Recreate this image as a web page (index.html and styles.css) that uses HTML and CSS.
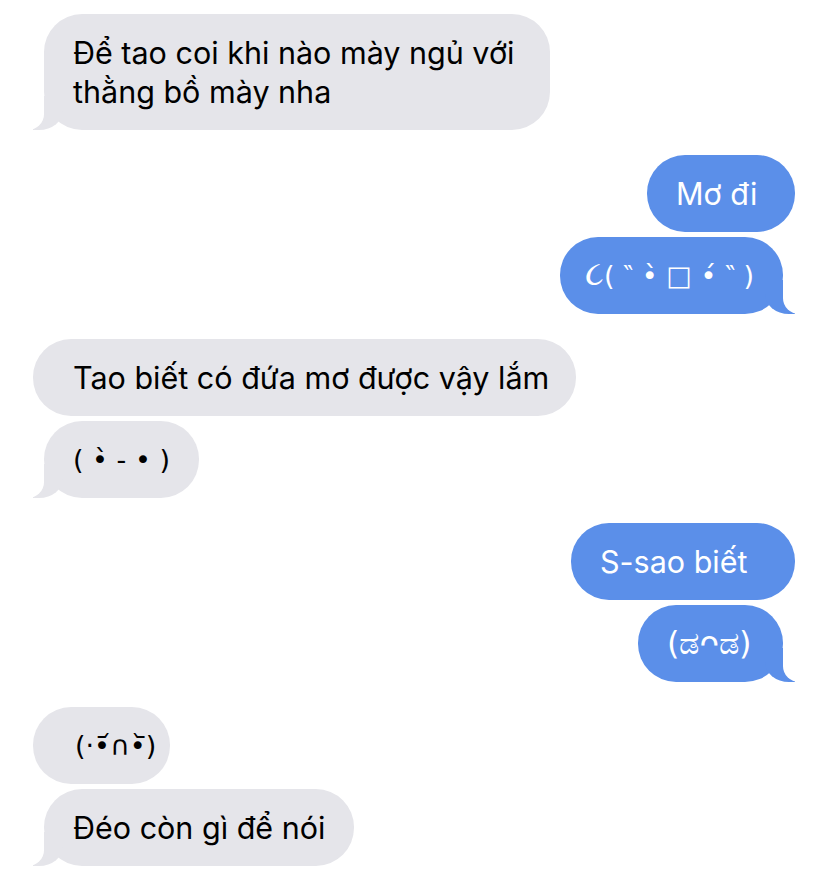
FILE: index.html
```html
<!DOCTYPE html>
<html lang="vi">
<head>
<meta charset="utf-8">
<title>Messages</title>
<link rel="stylesheet" href="styles.css">
</head>
<body>
<div class="thread">
  <div class="bubble in tail b1">Để tao coi khi nào mày ngủ với<br>thằng bồ mày nha</div>

  <div class="bubble out group-start b2">Mơ đi</div>
  <div class="bubble out tail b3"><span class="kao"><span class="hand">૮</span>( ‶ •̀ □ •́ ‶ )</span></div>

  <div class="bubble in group-start b4">Tao biết có đứa mơ được vậy lắm</div>
  <div class="bubble in tail b5"><span class="kao">( •̀ - • )</span></div>

  <div class="bubble out group-start b6">S-sao biết</div>
  <div class="bubble out tail b7"><span class="kao kao-kn">(ಡᴖಡ)</span></div>

  <div class="bubble in group-start b8"><span class="kao">(·•᷄∩•᷅)</span></div>
  <div class="bubble in tail b9">Đéo còn gì để nói</div>
</div>
</body>
</html>
```

FILE: styles.css
```css
html, body {
  margin: 0;
  padding: 0;
  background: #ffffff;
}

.thread {
  display: flex;
  flex-direction: column;
  gap: 5px;
  padding-top: 14px;
  font-family: "Inter", "Noto Sans", "DejaVu Sans", sans-serif;
  font-size: 30.5px;
  line-height: 39px;
}

.bubble {
  position: relative;
  box-sizing: border-box;
  padding: 19px 0 19px 29px;
  border-radius: 38px;
  white-space: nowrap;
}

.group-start {
  margin-top: 20px;
}

.in {
  align-self: flex-start;
  background: #e5e5ea;
  color: #000000;
  margin-left: 33px;
  padding-left: 40px;
}

.in.tail {
  margin-left: 44px;
  padding-left: 29px;
}

.out {
  align-self: flex-end;
  background: #5b8fe9;
  color: #ffffff;
  margin-right: 33px;
}

.out.tail {
  margin-right: 45px;
}

/* kaomoji */
.kao {
  display: inline-block;
  vertical-align: top;
  height: 39px;
  line-height: 39px;
  font-family: "DejaVu Sans", "Noto Sans", sans-serif;
  font-size: 27px;
}

.hand {
  font-size: 34px;
  line-height: 1;
}

.kao-kn {
  font-size: 32px;
}

/* tails */
.in.tail::before,
.out.tail::before {
  content: "";
  position: absolute;
  bottom: 0;
  width: 30px;
  height: 34px;
}

.in.tail::after,
.out.tail::after {
  content: "";
  position: absolute;
  bottom: 0;
  width: 40px;
  height: 34px;
  background: #ffffff;
}

.in.tail::before {
  left: -11px;
  background: #e5e5ea;
  border-bottom-right-radius: 24px 20px;
}

.in.tail::after {
  left: -40px;
  border-bottom-right-radius: 16px;
}

.out.tail::before {
  right: -12px;
  background: #5b8fe9;
  border-bottom-left-radius: 24px 20px;
}

.out.tail::after {
  right: -40px;
  border-bottom-left-radius: 16px;
}

/* sizes */
.b1 { width: 506px; }
.b2 { width: 148px; }
.b3 { width: 223px; padding-left: 25px; }
.b4 { width: 543px; }
.b5 { width: 155px; }
.b6 { width: 224px; }
.b7 { width: 145px; }
.b8 { width: 137px; padding-left: 42px; }
.b9 { width: 310px; }
```
